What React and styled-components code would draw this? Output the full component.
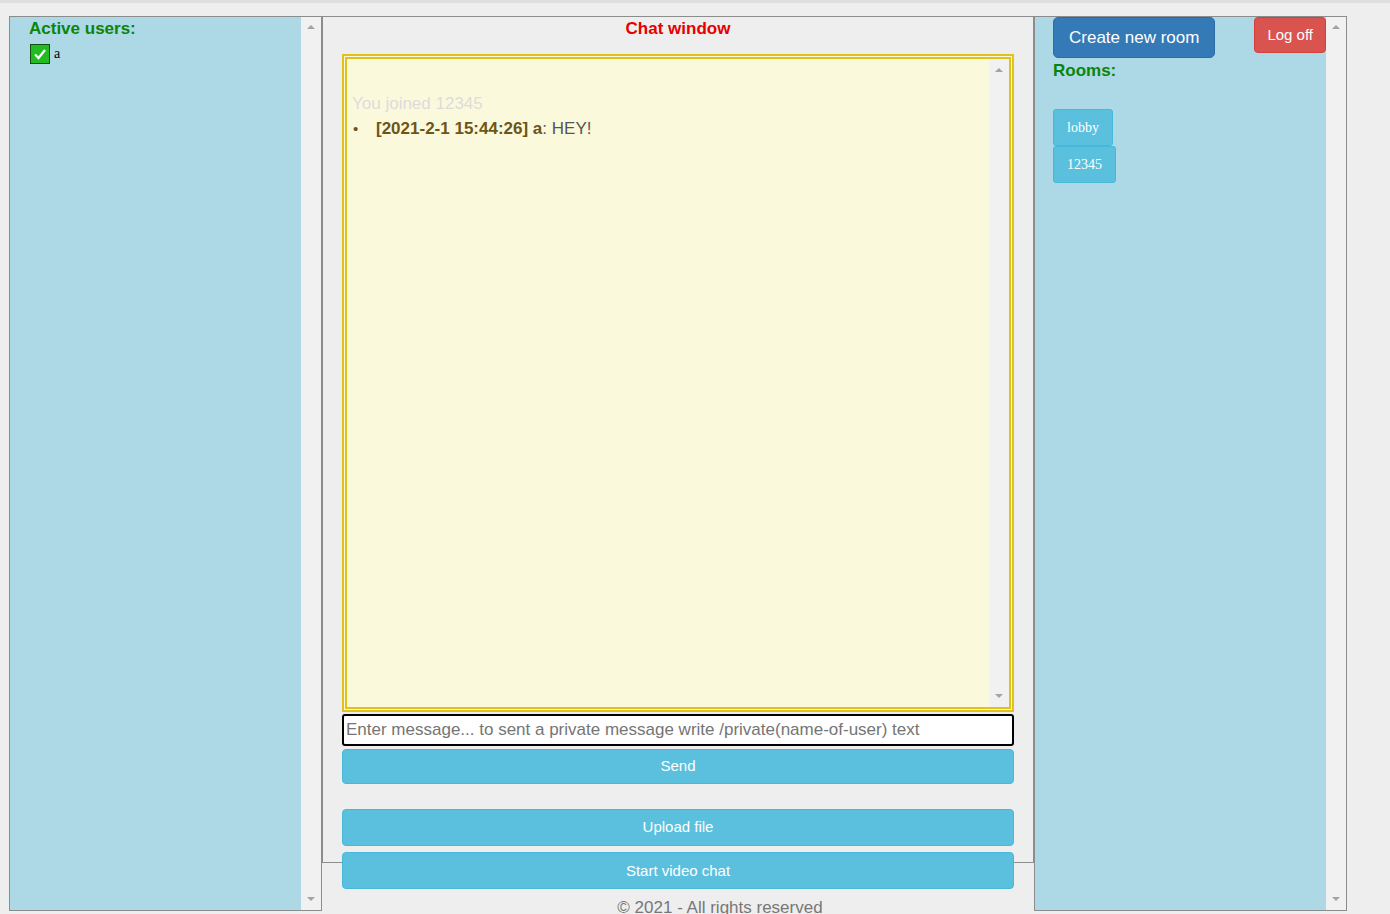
import React from "react";
import styled, { createGlobalStyle } from "styled-components";

const GlobalStyle = createGlobalStyle`
  html, body {
    margin: 0;
    padding: 0;
    overflow: hidden;
    background: #eeeeee;
  }
  body {
    font-family: "Liberation Sans", Arial, sans-serif;
  }
`;

const Page = styled.div`
  min-height: 911px;
  border-top: 3px solid #dedede;
  padding: 13px 0 0 9px;
  display: flex;
  align-items: flex-start;
`;

const SidePanel = styled.aside`
  width: 313px;
  height: 895px;
  box-sizing: border-box;
  border: 1px solid #8c8c8c;
  display: flex;
  background: #f1f1f1;
`;

const SideContent = styled.div`
  flex: 1;
  background: #add8e6;
  padding-left: ${(p) => p.$padLeft}px;
`;

const ScrollBar = styled.div`
  width: 20px;
  flex: none;
  background: #f1f1f1;
  display: flex;
  flex-direction: column;
  justify-content: space-between;
  align-items: center;
  padding: ${(p) => (p.$inner ? "9px 0 9px" : "8px 0 9px")};
  box-sizing: border-box;
`;

const Arrow = styled.span`
  width: 0;
  height: 0;
  border-left: 4px solid transparent;
  border-right: 4px solid transparent;
  ${(p) =>
    p.$down
      ? "border-top: 4px solid #a3a3a3;"
      : "border-bottom: 4px solid #a3a3a3;"}
`;

const SectionTitle = styled.h4`
  margin: 0;
  padding-top: ${(p) => p.$top || 0}px;
  font-size: 17px;
  line-height: 20px;
  font-weight: bold;
  color: ${(p) => p.$color || "#0a850a"};
  text-align: ${(p) => p.$align || "left"};
`;

const UserRow = styled.label`
  display: flex;
  align-items: center;
  gap: 4px;
  margin: 5px 0 0 1px;
  font-family: "Liberation Serif", "Times New Roman", serif;
  font-size: 14px;
  color: #000;
`;

const CheckBox = styled.span`
  width: 20px;
  height: 20px;
  box-sizing: border-box;
  border: 1px solid #134d13;
  background: #22bb22;
  display: grid;
  place-items: center;
`;

const MainPanel = styled.main`
  width: 712px;
  height: 847px;
  box-sizing: border-box;
  border: 1px solid #8c8c8c;
  padding: 0 19px;
  display: flex;
  flex-direction: column;
  & > * {
    flex: none;
  }
`;

const ChatBox = styled.div`
  height: 658px;
  margin-top: 15px;
  box-sizing: border-box;
  border: 5px double #e0c21d;
  background: #fbf9dc;
  display: flex;
`;

const Messages = styled.div`
  flex: 1;
  padding: 32px 5px 0;
  font-size: 17px;
  line-height: 25px;
`;

const Joined = styled.div`
  color: #dcdcdc;
`;

const MessageList = styled.ul`
  margin: 0;
  padding-left: 24px;
  list-style: none;
  li {
    color: #6d5417;
  }
  li::before {
    content: "•";
    display: inline-block;
    width: 24px;
    margin-left: -24px;
    text-indent: 1px;
    font-size: 15px;
  }
  b {
    font-weight: bold;
  }
  span {
    color: #555;
  }
`;

const MessageInput = styled.input`
  margin-top: 2px;
  height: 32px;
  width: 100%;
  box-sizing: border-box;
  border: 2px solid #000;
  border-radius: 3px;
  padding: 0 2px;
  background: #fff;
  font: 17px "Liberation Sans", Arial, sans-serif;
  outline: none;
  &::placeholder {
    color: #757575;
  }
`;

const ActionButton = styled.button`
  display: block;
  width: 100%;
  height: ${(p) => p.$h}px;
  margin-top: ${(p) => p.$gap}px;
  padding: 0 0 ${(p) => p.$lift || 0}px;
  background: #5bc0de;
  border: 1px solid #46b8da;
  border-radius: 4px;
  color: #fff;
  font: 15px "Liberation Sans", Arial, sans-serif;
`;

const Footer = styled.footer`
  margin-top: 9px;
  padding-left: 84px;
  text-align: center;
  color: #777;
  font-size: 17px;
  line-height: 20px;
`;

const HeaderRow = styled.div`
  display: flex;
  justify-content: space-between;
  align-items: flex-start;
`;

const TopButton = styled.button`
  height: ${(p) => p.$h}px;
  padding: 0 ${(p) => p.$px}px ${(p) => p.$lift || 0}px;
  background: ${(p) => p.$bg};
  border: 1px solid ${(p) => p.$border};
  border-radius: ${(p) => p.$radius}px;
  color: #fff;
  font: ${(p) => p.$size}px "Liberation Sans", Arial, sans-serif;
`;

const RoomList = styled.div`
  margin-top: 28px;
  display: flex;
  flex-direction: column;
  align-items: flex-start;
`;

const RoomButton = styled.button`
  height: 37px;
  padding: 0 13px;
  background: #5bc0de;
  border: 1px solid #46b8da;
  border-radius: 3px;
  color: #fff;
  font: 14px "Liberation Serif", "Times New Roman", serif;
`;

const Scroll = ({ inner }) => (
  <ScrollBar $inner={inner}>
    <Arrow />
    <Arrow $down />
  </ScrollBar>
);

export default function App() {
  return (
    <>
      <GlobalStyle />
      <Page>
        <SidePanel>
          <SideContent $padLeft={19}>
            <SectionTitle $top={2}>Active users:</SectionTitle>
            <UserRow>
              <CheckBox>
                <svg width="16" height="16" viewBox="0 0 16 16">
                  <path
                    d="M3 8.5 L6.5 12 L13 4"
                    fill="none"
                    stroke="#fff"
                    strokeWidth="2.2"
                  />
                </svg>
              </CheckBox>
              a
            </UserRow>
          </SideContent>
          <Scroll />
        </SidePanel>

        <MainPanel>
          <SectionTitle $top={2} $color="#e60000" $align="center">
            Chat window
          </SectionTitle>
          <ChatBox>
            <Messages>
              <Joined>You joined 12345</Joined>
              <MessageList>
                <li>
                  <b>[2021-2-1 15:44:26] a</b>
                  <span>: HEY!</span>
                </li>
              </MessageList>
            </Messages>
            <Scroll inner />
          </ChatBox>
          <MessageInput placeholder="Enter message... to sent a private message write /private(name-of-user) text" />
          <ActionButton $h={35} $gap={3} $lift={3}>Send</ActionButton>
          <ActionButton $h={37} $gap={25} $lift={2}>Upload file</ActionButton>
          <ActionButton $h={37} $gap={6}>Start video chat</ActionButton>
          <Footer>© 2021 - All rights reserved</Footer>
        </MainPanel>

        <SidePanel>
          <SideContent $padLeft={18}>
            <HeaderRow>
              <TopButton $h={41} $px={15} $bg="#337ab7" $border="#2e6da4" $radius={5} $size={17}>
                Create new room
              </TopButton>
              <TopButton $h={36} $px={12} $lift={2} $bg="#d9534f" $border="#d43f3a" $radius={4} $size={15}>
                Log off
              </TopButton>
            </HeaderRow>
            <SectionTitle $top={3}>Rooms:</SectionTitle>
            <RoomList>
              <RoomButton>lobby</RoomButton>
              <RoomButton>12345</RoomButton>
            </RoomList>
          </SideContent>
          <Scroll />
        </SidePanel>
      </Page>
    </>
  );
}
